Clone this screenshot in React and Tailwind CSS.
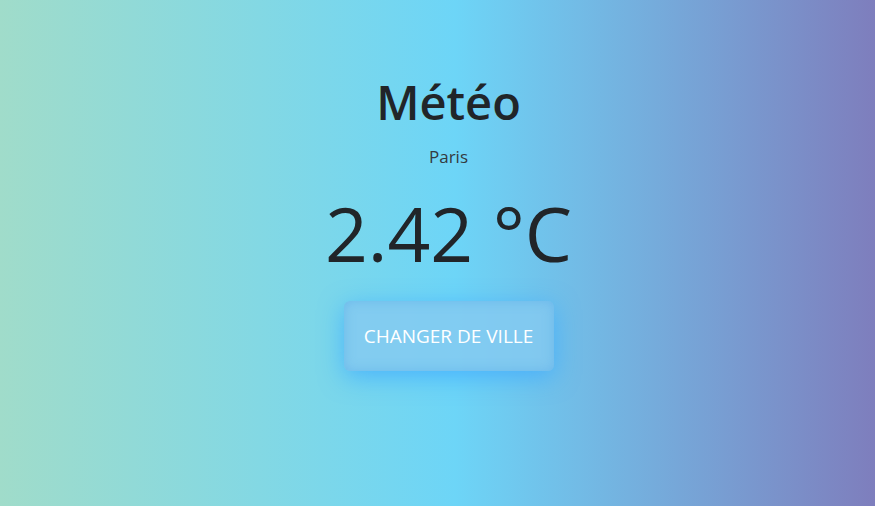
import React from 'react';

const App = () => {
  return (
    <div className="w-full h-[506px] pl-[22px] bg-[linear-gradient(to_right,#a0dcca_0%,#6dd5f7_52%,#7e7ebd_100%)] flex flex-col items-center font-['Open_Sans',sans-serif] text-[#212529]">
      <h1 className="mt-[70px] text-[47px] leading-[64px] font-semibold">Météo</h1>
      <p className="mt-[11px] text-[17px] leading-[23px] text-[#343a40]">Paris</p>
      <div className="mt-[20px] text-[75px] leading-[90px] font-normal">2.42 °C</div>
      <button className="mt-[23px] w-[210px] h-[70px] rounded-md bg-[#86c9f0]/80 text-white text-[19px] uppercase shadow-[0_6px_24px_rgba(60,170,255,0.75),inset_0_0_12px_rgba(80,165,230,0.45)]">
        Changer de ville
      </button>
    </div>
  );
};

export default App;
